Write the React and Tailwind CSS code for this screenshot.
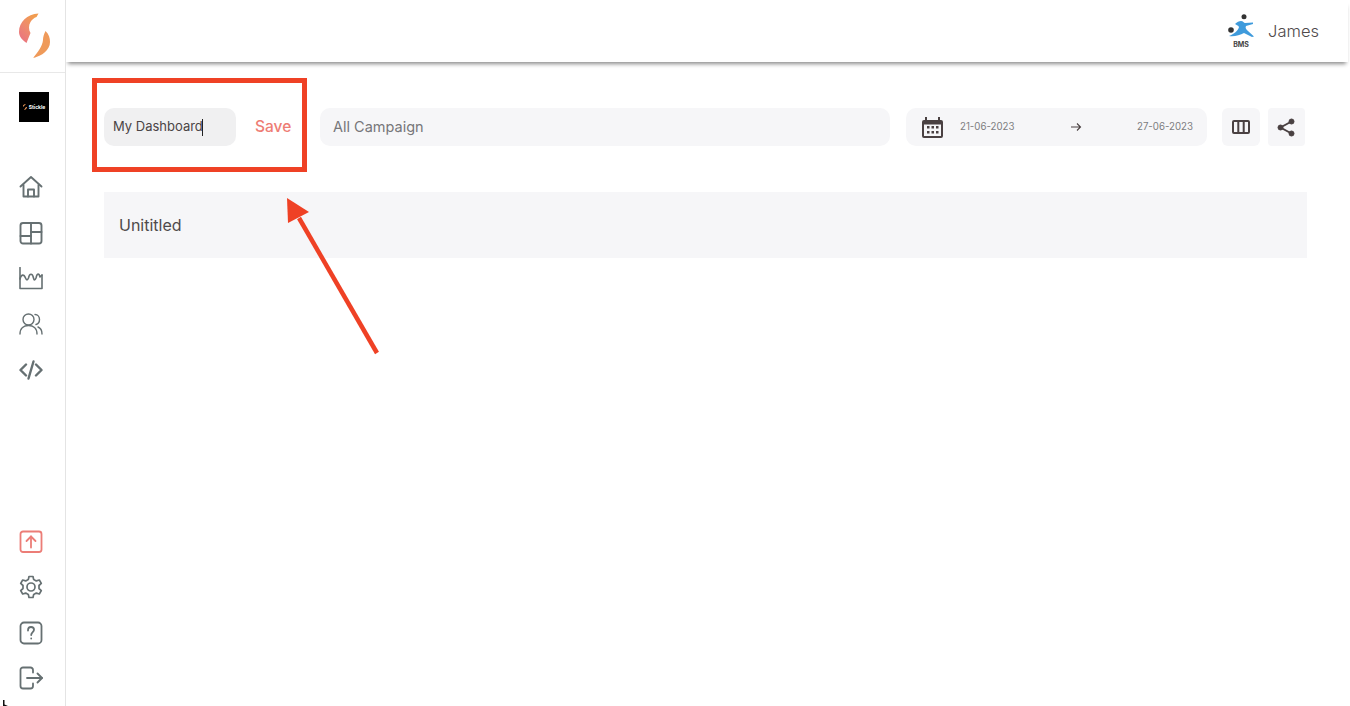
const stroke = "#667072";

function Logo() {
  return (
    <svg width="32" height="46" viewBox="0 0 32 46" className="block">
      <defs>
        <linearGradient id="lg" x1="0.1" y1="0.9" x2="0.7" y2="0.1">
          <stop offset="0" stopColor="#ea7480" />
          <stop offset="0.5" stopColor="#ee8a6e" />
          <stop offset="1" stopColor="#f19c50" />
        </linearGradient>
      </defs>
      <path d="M19.5 0.5 C8 1 0 9 0 19 C0 23 3 27 7.5 30 L11.5 20 C9.5 17 9.5 12 11.5 9 C13 6.5 15 5 17.5 4 Z" fill="url(#lg)" />
      <path d="M26.5 18 C30 21 31 25 31 29 C31 37 23 43 14 45 C19 39 23.5 33 24 27 C24 24 25 21 26.5 18 Z" fill="#ef9a5a" />
    </svg>
  );
}

function Icon({ children, color = stroke, w = 1.6 }) {
  return (
    <svg width="24" height="24" viewBox="0 0 24 24" fill="none" stroke={color} strokeWidth={w} strokeLinecap="round" strokeLinejoin="round" className="block">
      {children}
    </svg>
  );
}

function Nav({ children }) {
  return <div className="flex h-[24px] w-[24px] items-center justify-center">{children}</div>;
}

export default function App() {
  return (
    <div className="relative flex h-[706px] w-[1350px] overflow-hidden bg-white text-[#4a4445]" style={{ fontFamily: '"Inter", "Liberation Sans", sans-serif' }}>
      <aside className="relative z-10 flex h-full w-[66px] shrink-0 flex-col items-center border-r border-[#e4e4e4] bg-white">
        <div className="flex h-[73px] w-full items-center border-b border-[#e8e8e8] pl-[19px]">
          <Logo />
        </div>
        <div className="mt-[19px] ml-[3px] flex h-[30px] w-[30px] items-center justify-center gap-[2px] bg-black">
          <svg width="4" height="6" viewBox="0 0 4 6"><path d="M3 0 C1 0 0 1 0 2 L1 3 L1 2 Z M3 3 L4 3 C4 5 2 6 1 6 Z" fill="#ef9a5a" /></svg>
          <span className="text-[5px] font-bold leading-none text-white">Stickle</span>
        </div>
        <div className="mt-[53px] mr-[4px] flex flex-col items-center gap-[21.75px]">
          <Nav>
            <Icon w={1.9}>
              <path d="M1.5 11.5 L12 2 L22.5 11.5" />
              <path d="M4.5 10 V21.5 H19.5 V10" />
              <path d="M9 21.5 V14.5 H15 V21.5" />
            </Icon>
          </Nav>
          <Nav>
            <Icon w={1.9}>
              <rect x="1.5" y="2" width="21" height="20.5" rx="2.5" />
              <path d="M1.5 15 H12" />
              <path d="M12 11 H22.5" />
              <path d="M12 2 V22.5" />
            </Icon>
          </Nav>
          <Nav>
            <Icon w={1.6}>
              <path d="M1 0.5 V21.5 H23 V8" />
              <path d="M1 12 C2 7 5 7 6.5 11 C7.5 13.5 8.5 13.5 9.5 11 C10.5 6 13.5 6 14.5 11 C15 13.5 16 13.5 17 11 C18 6 20 6 21 10 L23 8" />
            </Icon>
          </Nav>
          <Nav>
            <Icon w={1.4}>
              <circle cx="9.5" cy="7.5" r="5.5" />
              <path d="M1 22 C1 16 5 13.5 9.5 13.5 C14 13.5 18 16 18 22" />
              <path d="M16 2.5 C19 2.5 20.5 5 20.5 7.5 C20.5 10 19 12 17 12.5" />
              <path d="M19 15 C21.5 16 23 19 23 22" />
            </Icon>
          </Nav>
          <Nav>
            <Icon w={2.4}>
              <path d="M7 6.5 L1.5 12 L7 17.5" />
              <path d="M17 6.5 L22.5 12 L17 17.5" />
              <path d="M14.5 3.5 L9.5 20.5" />
            </Icon>
          </Nav>
        </div>
        <div className="mt-auto mb-[16px] mr-[4px] flex flex-col items-center gap-[21.5px]">
          <Nav>
            <Icon color="#ec7d77" w={1.8}>
              <rect x="1.5" y="1.5" width="21" height="20.5" rx="2.5" />
              <path d="M12 17.5 V6.5" />
              <path d="M7.5 11 L12 6.5 L16.5 11" />
            </Icon>
          </Nav>
          <Nav>
            <Icon w={1.7}>
              <circle cx="12" cy="12" r="4" />
              <path d="M10 1.5 H14 L14.7 4.6 L17.3 5.9 L20.3 5 L22.3 8.4 L20 10.5 V13.5 L22.3 15.6 L20.3 19 L17.3 18.1 L14.7 19.4 L14 22.5 H10 L9.3 19.4 L6.7 18.1 L3.7 19 L1.7 15.6 L4 13.5 V10.5 L1.7 8.4 L3.7 5 L6.7 5.9 L9.3 4.6 Z" />
            </Icon>
          </Nav>
          <Nav>
            <Icon w={1.8}>
              <rect x="1.5" y="1.5" width="21" height="21" rx="3.5" />
              <path d="M9 9.5 C9 7 10.5 6 12 6 C13.8 6 15 7.2 15 8.8 C15 11 12.2 11.3 12.2 14" />
              <path d="M12.2 17.5 V17.6" />
            </Icon>
          </Nav>
          <Nav>
            <Icon w={1.8}>
              <path d="M14 6.5 V4 A2.5 2.5 0 0 0 11.5 1.5 H4 A2.5 2.5 0 0 0 1.5 4 V20 A2.5 2.5 0 0 0 4 22.5 H11.5 A2.5 2.5 0 0 0 14 20 V17.5" />
              <path d="M8 12 H23" />
              <path d="M18.5 7.5 L23 12 L18.5 16.5" />
            </Icon>
          </Nav>
        </div>
      </aside>

      <main className="flex min-w-0 flex-1 flex-col pr-[2px]">
        <header className="flex h-[62px] w-full shrink-0 items-center justify-end bg-white pr-[29px] shadow-[0_4px_4px_-2px_rgba(0,0,0,0.45)]">
          <svg width="30" height="37" viewBox="0 0 30 37" className="block">
            <circle cx="18" cy="3.7" r="2.5" fill="#333" />
            <path d="M9 11 C11 9 13 8 15 8 C17 8 18 10 19 10 L27 9.5 L27 11 L20 13 C19 15 20 16 22 18 L28 23.5 L26 24 L18 20 C14 22 8 24 3 23 C8 21 12 18 13 14 C12 12 10 12 9 11 Z" fill="#3f9bdc" />
            <circle cx="5" cy="17" r="2.8" fill="#333" />
            <text x="15" y="34" textAnchor="middle" fontSize="7" fontWeight="700" fill="#444">BMS</text>
          </svg>
          <span className="ml-[12px] text-[16.5px] font-light leading-none text-[#4f4a4b]">James</span>
        </header>

        <div className="flex items-center pl-[38px] pt-[46px]">
          <div className="flex h-[38px] w-[132px] items-center rounded-[10px] bg-[#f0f0f1] pl-[9px] text-[13px] text-[#4a4445]">
            My Dashboard<span className="ml-[-1px] h-[17px] w-px bg-[#222]" />
          </div>
          <span className="ml-[19px] w-[38px] text-[15.5px] font-medium text-[#ee7d74]">Save</span>
          <div className="ml-[27px] flex h-[38px] w-[570px] items-center rounded-[10px] bg-[#f6f6f8] pl-[13px] text-[14.5px] leading-none text-[#77777a]">
            All Campaign
          </div>
          <div className="ml-[16px] flex h-[38px] w-[301px] items-center rounded-[10px] bg-[#f6f6f8] pl-[16px] pr-[14px]">
            <svg width="21" height="23" viewBox="0 0 21 23" className="block shrink-0">
              <path d="M3 4 V1 H5 V4 H16 V1 H18 V4 H19 A2 2 0 0 1 21 6 V20 A2 2 0 0 1 19 22 H2 A2 2 0 0 1 0 20 V6 A2 2 0 0 1 2 4 Z" fill="#4a4142" />
              <rect x="2" y="8.5" width="17" height="11.5" fill="#f6f6f8" />
              {[5, 9.5, 14].flatMap((x) => [10, 15].map((y) => <rect key={`${x}-${y}`} x={x} y={y} width="2.5" height="2.5" fill="#4a4142" />))}
            </svg>
            <span className="ml-[17px] text-[9.7px] text-[#7d7d80]">21-06-2023</span>
            <svg width="12" height="10" viewBox="0 0 12 10" className="ml-[56px] block" fill="none" stroke="#4a4142" strokeWidth="1.1"><path d="M1 5 H10.5 M7 1.5 L10.5 5 L7 8.5" /></svg>
            <span className="ml-auto text-[9.7px] text-[#7d7d80]">27-06-2023</span>
          </div>
          <div className="ml-[15px] flex h-[38px] w-[38px] items-center justify-center rounded-[6px] bg-[#f6f6f8]">
            <svg width="18" height="14" viewBox="0 0 18 14" fill="none" stroke="#4a4142" strokeWidth="2" className="block"><rect x="1" y="1" width="16" height="12" rx="1" /><path d="M6.3 1 V13 M11.7 1 V13" /></svg>
          </div>
          <div className="ml-[8px] flex h-[38px] w-[37px] items-center justify-center rounded-[4px] bg-[#f6f6f8]">
            <svg width="18" height="19" viewBox="0 0 18 19" fill="#4a4142" stroke="#4a4142" className="-ml-[1px] block"><circle cx="14.5" cy="3.5" r="2.5" /><circle cx="3.5" cy="9.5" r="2.5" /><circle cx="14.5" cy="15.5" r="2.5" /><path d="M14.5 3.5 L3.5 9.5 L14.5 15.5" fill="none" strokeWidth="1.9" /></svg>
          </div>
        </div>

        <div className="ml-[38px] mt-[46px] flex h-[66px] w-[1203px] items-center bg-[#f6f6f8] pl-[15px] text-[16px] text-[#4f4a4b]">
          Unititled
        </div>
      </main>

      {/* annotation overlay */}
      <div className="pointer-events-none absolute left-[92px] top-[78px] z-20 h-[94px] w-[215px] border-[5px] border-[#ef4125]" />
      <svg className="pointer-events-none absolute left-[280px] top-[190px] z-20" width="105" height="170" viewBox="0 0 105 170">
        <path d="M97 163 L19 28" stroke="#ef4125" strokeWidth="4.5" fill="none" />
        <path d="M7 8 L29 22 L8 33 Z" fill="#ef4125" />
      </svg>
      <svg className="absolute bottom-0 left-[3px] z-20" width="6" height="6" viewBox="0 0 6 6"><path d="M0 0 L1.5 0 L1.5 4.5 L5 6 L0 6 Z" fill="#111" /></svg>
    </div>
  );
}
